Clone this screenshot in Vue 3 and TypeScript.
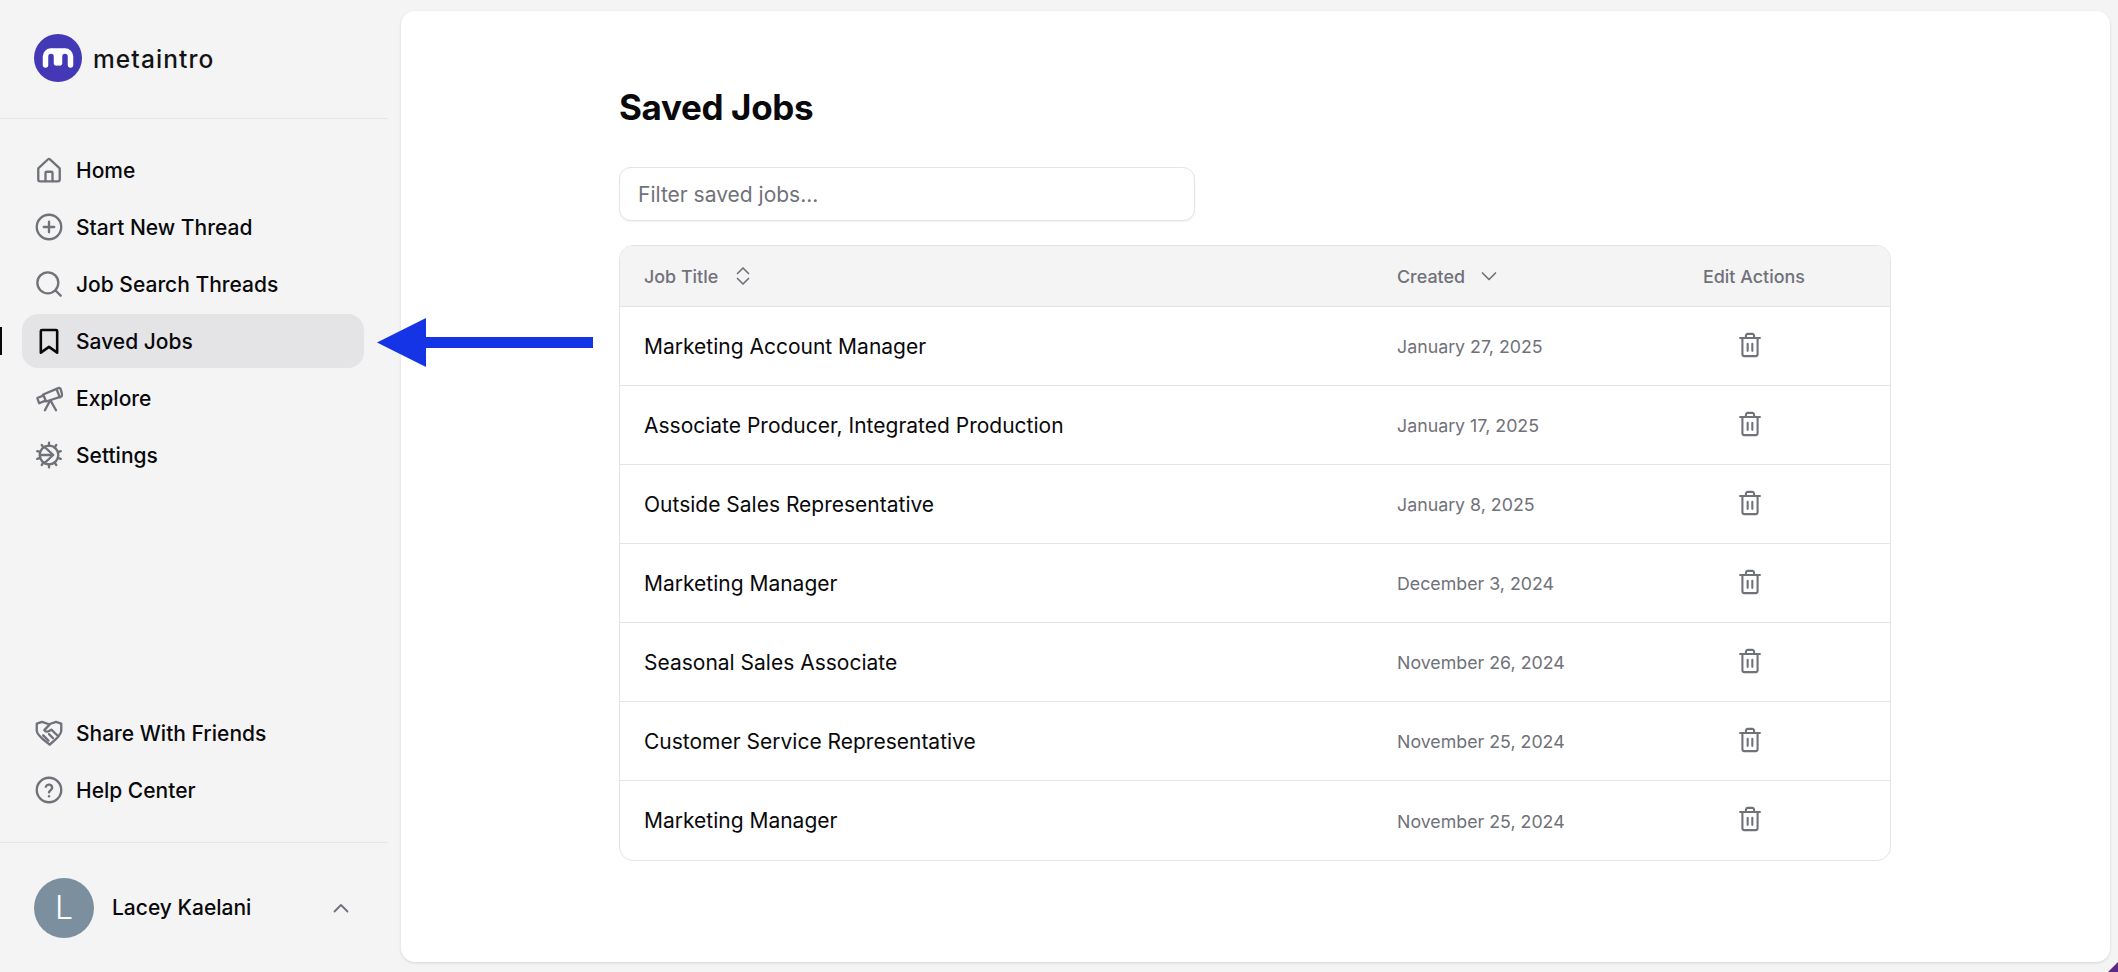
<script setup lang="ts">
interface NavItem { label: string; paths: string[]; active?: boolean }

const gearTeeth: string[] = Array.from({ length: 10 }, (_, i) => {
  const a = (i * Math.PI) / 5 + Math.PI / 10
  const p = (r: number) => `${(12 + r * Math.cos(a)).toFixed(2)} ${(12 + r * Math.sin(a)).toFixed(2)}`
  return `M${p(8)}L${p(10.6)}`
})

const topNav: NavItem[] = [
  { label: 'Home', paths: ['M2.800 10.600 11.200 2.800a1.200 1.200 0 0 1 1.600 0L21.200 10.600v9.600a1.500 1.500 0 0 1-1.500 1.500H4.300a1.500 1.500 0 0 1-1.500-1.500z', 'M9 21.500V14.500a1 1 0 0 1 1-1h4a1 1 0 0 1 1 1v7'] },
  { label: 'Start New Thread', paths: ['M22.500 12a10.500 10.500 0 1 1-21 0a10.500 10.500 0 1 1 21 0z', 'M12 7.500v9', 'M7.500 12h9'] },
  { label: 'Job Search Threads', paths: ['M20 11a9 9 0 1 1-18 0a9 9 0 1 1 18 0z', 'M17.600 17.600 22 22'] },
  { label: 'Saved Jobs', active: true, paths: ['M5 3.500a1 1 0 0 1 1-1h12a1 1 0 0 1 1 1V22l-7-5-7 5z'] },
  { label: 'Explore', paths: ['M7 9 20 3.500a1.500 1.500 0 0 1 2 .9l1.200 4.400a1.500 1.500 0 0 1-.9 2L9.500 15z', 'M7 10 2 12l1.500 4.500 5-2', 'M12.500 15 8.500 22.500', 'M13.500 14.500 18 22.500', 'M18.500 4.500l2.800 7'] },
  { label: 'Settings', paths: ['M20 12a8 8 0 1 1-16 0a8 8 0 1 1 16 0z', ...gearTeeth, 'M8.500 5.500Q12 8.500 15.500 12Q12 15.500 8.500 18.500', 'M4.800 12H15.500'] },
]

const bottomNav: NavItem[] = [
  { label: 'Share With Friends', paths: ['M1.500 4 6 2.500 12 4.500 18 2.500 22.500 4V10C22.500 14 16 19 12.500 22 9 19 1.500 14 1.500 10z', 'M12.500 4.800 8 9.500c1 1.600 3 1.700 4.500.6l1.500-1 5 4.800', 'M7 14l4.500 4.500', 'M12 13l3.500 3.500'] },
  { label: 'Help Center', paths: ['M22.500 12a10.500 10.500 0 1 1-21 0a10.500 10.500 0 1 1 21 0z', 'M9.300 9.200a2.800 2.800 0 0 1 5.400.9c0 1.900-2.700 2.400-2.700 4', 'M12 17.300v.1'] },
]

interface Job { title: string; created: string }
const jobs: Job[] = [
  { title: 'Marketing Account Manager', created: 'January 27, 2025' },
  { title: 'Associate Producer, Integrated Production', created: 'January 17, 2025' },
  { title: 'Outside Sales Representative', created: 'January 8, 2025' },
  { title: 'Marketing Manager', created: 'December 3, 2024' },
  { title: 'Seasonal Sales Associate', created: 'November 26, 2024' },
  { title: 'Customer Service Representative', created: 'November 25, 2024' },
  { title: 'Marketing Manager', created: 'November 25, 2024' },
]
</script>

<template>
  <div class="app">
    <aside class="sidebar">
      <div class="brand">
        <svg class="logo" viewBox="0 0 48 48" width="48" height="48">
          <circle cx="24" cy="24" r="24" fill="#4338b5" />
          <path d="M11.500 31V22.500a5.500 5.500 0 0 1 11 0V29M25.500 29V22.500a5.500 5.500 0 0 1 11 0V31M18 17h12" fill="none" stroke="#fff" stroke-width="5.500" stroke-linecap="round" />
        </svg>
        <span class="brand-name">metaintro</span>
      </div>

      <nav class="nav">
        <a v-for="item in topNav" :key="item.label" class="nav-item" :class="{ active: item.active }">
          <span v-if="item.active" class="marker"></span>
          <svg class="icon" viewBox="0 0 24 24" width="28" height="28">
            <path v-for="d in item.paths" :key="d" :d="d" />
          </svg>
          <span>{{ item.label }}</span>
        </a>
      </nav>

      <nav class="nav nav-bottom">
        <a v-for="item in bottomNav" :key="item.label" class="nav-item">
          <svg class="icon" viewBox="0 0 24 24" width="28" height="28">
            <path v-for="d in item.paths" :key="d" :d="d" />
          </svg>
          <span>{{ item.label }}</span>
        </a>
      </nav>

      <div class="user">
        <div class="avatar">L</div>
        <span class="user-name">Lacey Kaelani</span>
        <svg class="user-chevron" viewBox="0 0 16 10" width="16" height="10">
          <path d="M1.500 8.500 8 2l6.500 6.500" />
        </svg>
      </div>
    </aside>

    <main class="card">
      <div class="content">
        <h1 class="title">Saved Jobs</h1>
        <input class="filter" type="text" placeholder="Filter saved jobs..." />

        <div class="table">
          <div class="row head">
            <div class="cell-title">
              <span>Job Title</span>
              <svg class="sort" viewBox="0 0 16 20" width="16" height="20">
                <path d="M2.500 7.500 8 2l5.500 5.500M2.500 12.500 8 18l5.500-5.500" />
              </svg>
            </div>
            <div class="cell-title">
              <span>Created</span>
              <svg class="sort down" viewBox="0 0 16 10" width="16" height="10">
                <path d="M1.500 2 8 8.500 14.500 2" />
              </svg>
            </div>
            <div>Edit Actions</div>
          </div>

          <div v-for="(job, i) in jobs" :key="i" class="row body">
            <div class="job">{{ job.title }}</div>
            <div class="date">{{ job.created }}</div>
            <div class="actions">
              <svg class="trash" viewBox="0 0 24 24" width="28" height="28">
                <path d="M3.500 6h17M5.500 6v14A1.500 1.500 0 0 0 7 21.500h10a1.500 1.500 0 0 0 1.500-1.500V6M8.500 6V4A1.500 1.500 0 0 1 10 2.500h4A1.500 1.500 0 0 1 15.500 4v2M10 11v6M14 11v6" />
              </svg>
            </div>
          </div>
        </div>
      </div>
    </main>

    <svg class="arrow" viewBox="0 0 216 49" width="216" height="49">
      <path d="M0 24.500 49 0v19h167v11H49v19z" fill="#1434e6" />
    </svg>
    <span class="corner corner-left"></span>
    <span class="corner corner-right"></span>
  </div>
</template>

<style>
html, body { margin: 0; background: #f4f4f5; overflow: hidden; }
</style>

<style scoped>
.app {
  position: relative;
  display: flex;
  width: 2118px;
  height: 972px;
  overflow: hidden;
  background: #f4f4f5;
  font-family: Inter, "Liberation Sans", sans-serif;
  color: #09090b;
}

.sidebar {
  display: flex;
  flex-direction: column;
  flex: 0 0 401px;
  width: 401px;
  box-sizing: border-box;
  padding-right: 13px;
}

.brand {
  display: flex;
  align-items: center;
  gap: 11px;
  height: 119px;
  padding-left: 34px;
  box-sizing: border-box;
  border-bottom: 1px solid #e6e6e8;
}

.logo { flex: none; margin-top: -2px; }

.brand-name {
  font-family: Inter, sans-serif;
  font-size: 24.500px;
  font-weight: 500;
  letter-spacing: 1.100px;
  color: #131316;
}

.nav {
  display: flex;
  flex-direction: column;
  gap: 3px;
  padding: 24px 24px 0 22px;
}

.nav-bottom {
  margin-top: auto;
  padding-top: 0;
  padding-bottom: 25px;
  border-bottom: 1px solid #e6e6e8;
}

.nav-item {
  position: relative;
  display: flex;
  align-items: center;
  gap: 13px;
  height: 54px;
  padding-left: 13px;
  border-radius: 16px;
  font-size: 21px;
  font-weight: 500;
}

.nav-item.active { background: #e4e4e7; }

.marker {
  position: absolute;
  left: -22px;
  top: 13px;
  width: 2px;
  height: 28px;
  background: #09090b;
}

.icon {
  flex: none;
  fill: none;
  stroke: #6f7278;
  stroke-width: 2;
  stroke-linecap: round;
  stroke-linejoin: round;
}

.active .icon { stroke: #09090b; stroke-width: 2.200; }

.user {
  display: flex;
  align-items: center;
  height: 129px;
  padding-left: 34px;
}

.avatar {
  display: flex;
  align-items: center;
  justify-content: center;
  width: 60px;
  height: 60px;
  border-radius: 50%;
  background: #7b8f9e;
  color: #fff;
  font-size: 32px;
  font-weight: 300;
}

.user-name {
  margin-left: 18px;
  font-size: 21px;
  font-weight: 500;
  width: 221px;
}

.user-chevron {
  fill: none;
  stroke: #6f7278;
  stroke-width: 1.800;
  stroke-linecap: round;
  stroke-linejoin: round;
}

.card {
  flex: 1;
  margin: 11px 8px 10px 0;
  background: #fff;
  border-radius: 14px;
  box-shadow: 0 1px 3px rgba(0, 0, 0, 0.12);
}

.content {
  width: 1272px;
  margin-left: 218px;
  padding-top: 74px;
}

.title {
  margin: 0 0 38px;
  font-size: 35px;
  line-height: 44px;
  font-weight: 700;
  letter-spacing: -0.35px;
  color: #09090b;
}

.filter {
  display: block;
  width: 576px;
  height: 54px;
  box-sizing: border-box;
  padding: 0 18px;
  border: 1px solid #e4e4e7;
  border-radius: 12px;
  box-shadow: 0 1px 2px rgba(0, 0, 0, 0.06);
  outline: none;
  font-family: inherit;
  font-size: 21px;
  color: #09090b;
}

.filter::placeholder { color: #71717a; opacity: 1; }

.table {
  margin-top: 24px;
  border: 1px solid #e4e4e7;
  border-radius: 14px;
  overflow: hidden;
}

.row {
  display: grid;
  grid-template-columns: 753px 306px 1fr;
  align-items: center;
  padding-left: 24px;
  box-sizing: border-box;
}

.head {
  height: 61px;
  background: #f4f4f5;
  border-bottom: 1px solid #e4e4e7;
  font-size: 17.900px;
  font-weight: 500;
  color: #71717a;
}

.cell-title {
  display: flex;
  align-items: center;
}

.sort {
  margin-left: 17px;
  fill: none;
  stroke: #6f7278;
  stroke-width: 1.700;
  stroke-linecap: round;
  stroke-linejoin: round;
}

.sort.down { margin-left: 16px; }

.body {
  height: 79px;
  border-bottom: 1px solid #e4e4e7;
}

.body:last-child { border-bottom: none; }

.job { font-size: 21px; color: #09090b; }

.date { font-size: 17.800px; color: #71717a; padding-top: 1px; }

.actions { display: flex; padding-left: 33px; margin-top: -3px; }

.trash {
  fill: none;
  stroke: #6f7278;
  stroke-width: 1.800;
  stroke-linecap: round;
  stroke-linejoin: round;
}

.arrow {
  position: absolute;
  left: 377px;
  top: 318px;
}

.corner {
  position: absolute;
  bottom: -14px;
  width: 14px;
  height: 28px;
}

.corner-left {
  left: -14px;
  width: 28px;
  border-radius: 50%;
  background: #8d8d90;
  clip-path: polygon(0 0, 100% 100%, 0 100%);
}

.corner-right {
  right: -2px;
  width: 12px;
  height: 12px;
  bottom: 0;
  background: #5b2a86;
  clip-path: polygon(100% 0, 100% 100%, 0 100%);
}
</style>
